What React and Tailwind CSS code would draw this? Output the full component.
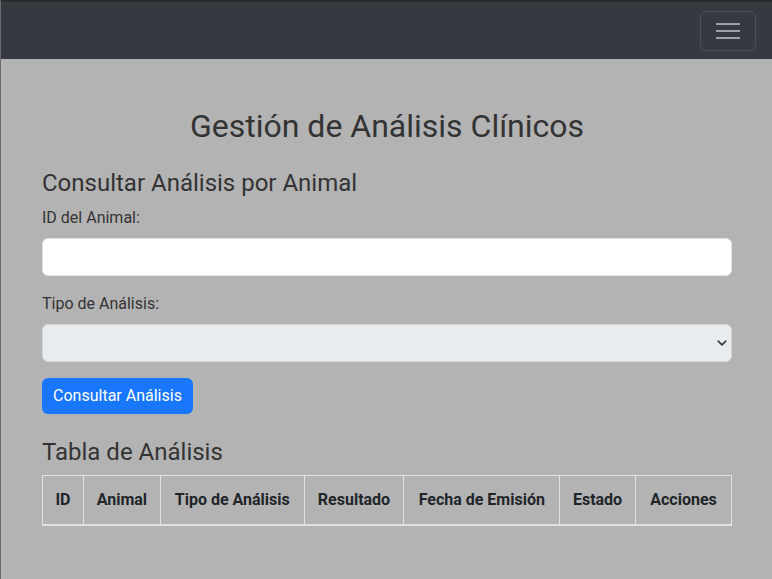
import React from "react";

const columns = [
  { label: "ID", w: "w-[41px]" },
  { label: "Animal", w: "w-[77px]" },
  { label: "Tipo de Análisis", w: "w-[144px]" },
  { label: "Resultado", w: "w-[100px]" },
  { label: "Fecha de Emisión", w: "w-[156px]" },
  { label: "Estado", w: "w-[76px]" },
  { label: "Acciones", w: "w-[96px]" },
];

export default function App() {
  return (
    <div className="min-h-[579px] bg-[#b3b3b3] border-l border-[#6b6b6b] text-[#333] font-['Roboto',sans-serif]">
      {/* NAVBAR */}
      <nav className="h-[59px] bg-[#343a40] border-t-2 border-[#2b2b2b] flex items-center justify-end pr-[16px]">
        <button className="w-[56px] h-[40px] rounded-[6px] border border-white/10 flex flex-col items-center justify-center gap-[5px]">
          <span className="block w-[24px] h-[2px] bg-[#9ea2a7]" />
          <span className="block w-[24px] h-[2px] bg-[#9ea2a7]" />
          <span className="block w-[24px] h-[2px] bg-[#9ea2a7]" />
        </button>
      </nav>

      {/* CONTENT */}
      <main className="pl-[41px] pr-[40px] pt-[48px] pb-10">
        <h2 className="text-[32px] leading-[1.2] text-center mb-6">
          Gestión de Análisis Clínicos
        </h2>

        <h4 className="text-[24px] leading-[1.2] mb-2">
          Consultar Análisis por Animal
        </h4>

        <label className="block text-base leading-6 mb-2">ID del Animal:</label>
        <input
          type="text"
          className="block w-full h-[38px] bg-white rounded-[6px] border border-[#dee2e6] px-3 mb-4"
        />

        <label className="block text-base leading-6 mb-2">Tipo de Análisis:</label>
        <div className="relative mb-4">
          <div className="w-full h-[38px] bg-[#e9ecef] rounded-[6px] border border-[#d3d6d9]" />
          <svg
            className="absolute right-[4px] top-[14px]"
            width="12"
            height="10"
            viewBox="0 0 16 16"
          >
            <path
              d="M2 5l6 6 6-6"
              fill="none"
              stroke="#343a40"
              strokeWidth="2.5"
              strokeLinecap="round"
              strokeLinejoin="round"
            />
          </svg>
        </div>

        <button className="h-[36px] w-[151px] bg-[#1877fd] text-white text-base rounded-[6px]">
          Consultar Análisis
        </button>

        <h4 className="text-[24px] leading-[1.2] mt-6 mb-2">Tabla de Análisis</h4>

        <table className="w-full border-collapse border border-[#dee2e6]">
          <thead>
            <tr className="border-b-2 border-[#dee2e6]">
              {columns.map((c) => (
                <th
                  key={c.label}
                  className={`${c.w} h-[50px] px-2 border border-[#dee2e6] text-base font-bold text-[#212529] text-center`}
                >
                  {c.label}
                </th>
              ))}
            </tr>
          </thead>
          <tbody />
        </table>
      </main>
    </div>
  );
}
